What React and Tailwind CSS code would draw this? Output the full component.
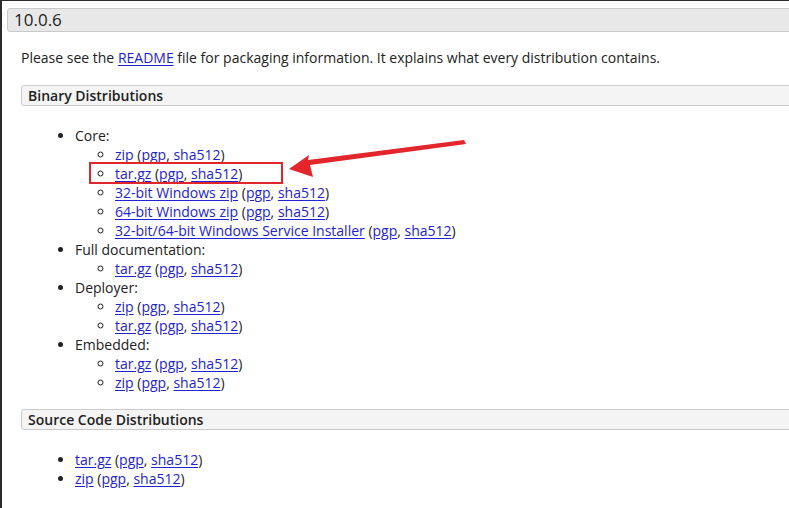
import React from "react";

const core = [
  "zip",
  "tar.gz",
  "32-bit Windows zip",
  "64-bit Windows zip",
  "32-bit/64-bit Windows Service Installer",
];

const groups = [
  { title: "Core:", items: core },
  { title: "Full documentation:", items: ["tar.gz"] },
  { title: "Deployer:", items: ["zip", "tar.gz"] },
  { title: "Embedded:", items: ["tar.gz", "zip"] },
];

const Link = ({ children }) => (
  <a href="#" className="text-[#2323d4] underline underline-offset-2">
    {children}
  </a>
);

const Dist = ({ name, boxed }) => (
  <span className={boxed ? "relative" : ""}>
    <Link>{name}</Link> (<Link>pgp</Link>, <Link>sha512</Link>)
    {boxed && (
      <span className="absolute left-[-26px] top-[-2px] w-[194px] h-[22px] border-2 border-[#e3262b] pointer-events-none" />
    )}
  </span>
);

const Arrow = () => (
  <svg
    className="absolute left-0 top-0 pointer-events-none"
    width="789"
    height="508"
    viewBox="0 0 789 508"
  >
    <polygon
      points="462,139 464,143 308,164 311,176 287,168 307,154 306,159"
      fill="#e3262b"
    />
  </svg>
);

export default function App() {
  return (
    <div
      className="relative w-[789px] h-[508px] overflow-hidden bg-white border-t border-l-2 border-[#2b2b2b] text-[14px] text-[#222]"
      style={{ fontFamily: '"Open Sans", sans-serif' }}
    >
      <div className="ml-[5px] mt-[7px] mr-[-6px] h-[24px] bg-[#e8e8e8] border border-[#c9c9c9] rounded-[3px] pl-[6px] text-[17px] leading-[22px] font-medium text-[#222]">
        10.0.6
      </div>

      <p className="ml-[19px] mt-[16px] leading-[19px]">
        Please see the <Link>README</Link> file for packaging information. It explains what every distribution contains.
      </p>

      <div className="ml-[19px] mt-[18px] mr-[-6px] h-[21px] bg-[#f4f4f4] border border-[#cacaca] rounded-[3px] pl-[6px] font-semibold leading-[19px]">
        Binary Distributions
      </div>

      <ul className="list-disc ml-[73px] mt-[20px] leading-[19px]">
        {groups.map((g) => (
          <li key={g.title}>
            {g.title}
            <ul className="list-[circle] ml-[40px]">
              {g.items.map((it, i) => (
                <li key={it + i}>
                  <Dist name={it} boxed={g.title === "Core:" && i === 1} />
                </li>
              ))}
            </ul>
          </li>
        ))}
      </ul>

      <div className="ml-[19px] mt-[17px] mr-[-6px] h-[21px] bg-[#f4f4f4] border border-[#cacaca] rounded-[3px] pl-[6px] font-semibold leading-[19px]">
        Source Code Distributions
      </div>

      <ul className="list-disc ml-[73px] mt-[20px] leading-[19px]">
        <li>
          <Dist name="tar.gz" />
        </li>
        <li>
          <Dist name="zip" />
        </li>
      </ul>

      <Arrow />
    </div>
  );
}
